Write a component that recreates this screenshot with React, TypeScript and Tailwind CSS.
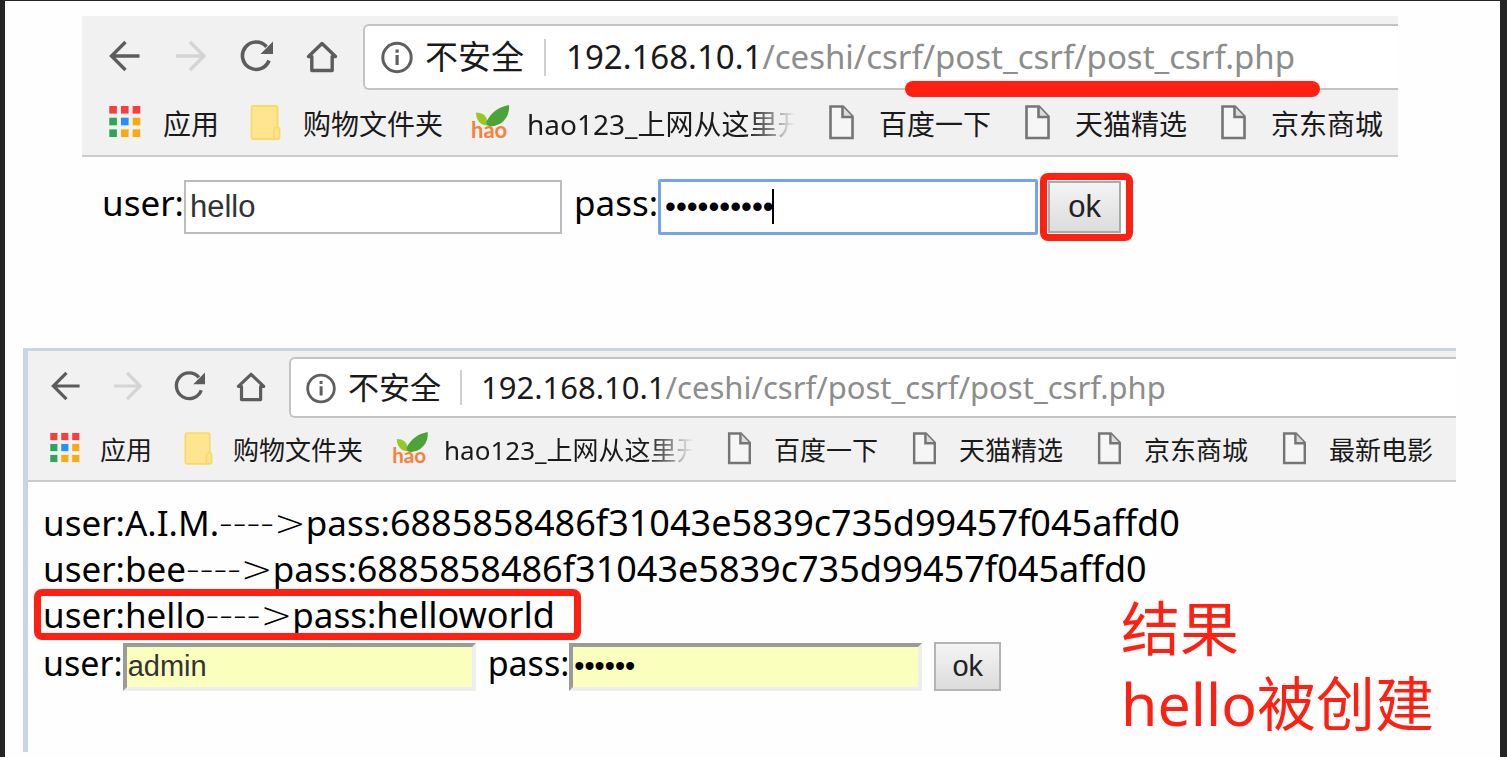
import type { ReactNode } from "react";

type Size = "lg" | "md";

const URL_HOST = "192.168.10.1";
const URL_PATH = "/ceshi/csrf/post_csrf/post_csrf.php";

const sizes = {
  lg: {
    icon: "size-8 shrink-0 overflow-visible",
    nav: "flex items-center gap-[34px] pr-6 pb-[3px] pl-[27px]",
    toolbar: "flex pt-2",
    address:
      "relative flex h-[66px] flex-1 items-center rounded-l-md border-2 border-r-0 border-[#c3c3c3] bg-white pl-4",
    secure: "ml-3 text-[33px]",
    divider: "mx-5 h-[37px] w-0.5 bg-[#cfcfcf]",
    url: "text-[33px]",
    bookmarks: "flex h-[65px] items-center gap-[30px] overflow-hidden pb-0.5 pl-[27px] text-[28px]",
    bookmark: "flex shrink-0 items-center gap-[22px] whitespace-nowrap",
    faded: "w-[268px] pt-1",
  },
  md: {
    icon: "size-[30px] shrink-0 overflow-visible",
    nav: "flex items-center gap-8 pr-[22px] pb-[3px] pl-[23px]",
    toolbar: "flex pt-[6px]",
    address:
      "relative flex h-[61px] flex-1 items-center rounded-l-md border-2 border-r-0 border-[#c3c3c3] bg-white pl-[15px]",
    secure: "ml-3 text-[31px]",
    divider: "mx-[19px] h-[35px] w-0.5 bg-[#cfcfcf]",
    url: "text-[31px]",
    bookmarks: "flex h-[62px] items-center gap-[31px] overflow-hidden pb-0.5 pl-[22px] text-[26px]",
    bookmark: "flex shrink-0 items-center gap-5 whitespace-nowrap",
    faded: "w-[249px] pt-1",
  },
};

function BackIcon({ className }: { className: string }) {
  return (
    <svg viewBox="0 0 32 32" className={className} fill="none" stroke="currentColor" strokeWidth="3.400" aria-hidden="true">
      <path d="M30.500 16H3M16.500 2 2.500 16l14 14" />
    </svg>
  );
}

function ForwardIcon({ className }: { className: string }) {
  return (
    <svg viewBox="0 0 32 32" className={className} fill="none" stroke="currentColor" strokeWidth="3.400" aria-hidden="true">
      <path d="M1 16h28M15 2l14 14-14 14" />
    </svg>
  );
}

function ReloadIcon({ className }: { className: string }) {
  return (
    <svg viewBox="0 0 32 32" className={className} aria-hidden="true">
      <path
        d="M25.500 6.700A13.700 13.700 0 1 0 28 20.500"
        fill="none"
        stroke="currentColor"
        strokeWidth="3.600"
      />
      <path d="M32 1.500v12.500H19.500z" fill="currentColor" />
    </svg>
  );
}

function HomeIcon({ className }: { className: string }) {
  return (
    <svg
      viewBox="0 0 32 32"
      className={className}
      fill="none"
      stroke="currentColor"
      strokeWidth="3.400"
      strokeLinejoin="round"
      aria-hidden="true"
    >
      <path d="M15 3.500 1.500 16.500h3.300V30.500h20.400V16.500h3.300z" />
    </svg>
  );
}

function InfoIcon({ className }: { className: string }) {
  return (
    <svg viewBox="0 0 32 32" className={className} aria-hidden="true">
      <circle cx="16" cy="16.500" r="14.200" fill="none" stroke="currentColor" strokeWidth="3" />
      <path d="M14.500 8.500h3.200v3.200h-3.200zM14.500 14h3.200v10h-3.200z" fill="currentColor" />
    </svg>
  );
}

function AppsIcon({ className }: { className: string }) {
  const colors = [
    "#fb3c3c", "#fb3c3c", "#fb3c3c",
    "#2ea35b", "#2390fb", "#fba90c",
    "#2ea35b", "#fba90c", "#fba90c",
  ];
  return (
    <svg viewBox="0 0 32 32" className={className} aria-hidden="true">
      {colors.map((color, i) => (
        <rect key={i} x={(i % 3) * 11.7 + 0.3} y={Math.floor(i / 3) * 11.7} width="7.600" height="7.600" fill={color} />
      ))}
    </svg>
  );
}

function FolderIcon({ className }: { className: string }) {
  return (
    <svg viewBox="0 0 32 32" className={className} fill="#ffe590" stroke="#fbd963" strokeWidth="1.800" aria-hidden="true">
      <path d="M4.500 0h22a2 2 0 0 1 2 2v18l2 3v8a2 2 0 0 1-2 2h-24a2 2 0 0 1-2-2V2a2 2 0 0 1 2-2z" />
      <path d="M25 31V24.500a3 3 0 0 1 3-3.200M25 31a2 2 0 0 0 2 2" fill="none" />
    </svg>
  );
}

function FileIcon({ className }: { className: string }) {
  return (
    <svg viewBox="0 0 32 32" className={className} fill="#f6f6f6" stroke="#757575" strokeWidth="2.600" aria-hidden="true">
      <path d="M5.500 0.500h12.500l9.500 10V32h-22z" />
      <path d="M17.500 0.500v10.500h10" fill="#dcdcdc" />
    </svg>
  );
}

function HaoIcon({ className }: { className: string }) {
  return (
    <svg viewBox="0 0 32 32" className={className} aria-hidden="true">
      <path d="M3 6.500c7 0 11.500 3 12 13C8 19.500 3 15 3 6.500z" fill="#96ca22" />
      <path d="M36-1c1 12-7 21-19 21.500-3-1-4-3-3.500-5C18 7 25 1 36-1z" fill="#4aa437" />
      <text x="-2" y="32" fontSize="22" fontWeight="700" fill="#f5813a" fontFamily="Lato, sans-serif">
        hao
      </text>
    </svg>
  );
}

const bookmarks = [
  { label: "应用", Icon: AppsIcon },
  { label: "购物文件夹", Icon: FolderIcon },
  { label: "hao123_上网从这里开", Icon: HaoIcon, faded: true },
  { label: "百度一下", Icon: FileIcon },
  { label: "天猫精选", Icon: FileIcon },
  { label: "京东商城", Icon: FileIcon },
  { label: "最新电影", Icon: FileIcon },
];

function BrowserChrome({ size, count, children }: { size: Size; count: number; children?: ReactNode }) {
  const s = sizes[size];
  return (
    <header className="border-b-2 border-[#cbcbcb] bg-[#f1f1f1]">
      <div className={s.toolbar}>
        <nav className={s.nav} aria-label="Navigation">
          <button type="button" aria-label="Back" className="text-[#5c5c5c]">
            <BackIcon className={s.icon} />
          </button>
          <button type="button" aria-label="Forward" disabled className="text-[#d4d4d4]">
            <ForwardIcon className={s.icon} />
          </button>
          <button type="button" aria-label="Reload" className="text-[#5c5c5c]">
            <ReloadIcon className={s.icon} />
          </button>
          <button type="button" aria-label="Home" className="text-[#5c5c5c]">
            <HomeIcon className={s.icon} />
          </button>
        </nav>
        <div className={s.address}>
          <span className="text-[#5f5f5f]">
            <InfoIcon className={s.icon} />
          </span>
          <span className={s.secure}>不安全</span>
          <span className={s.divider} />
          <span className={s.url}>
            {URL_HOST}
            <span className="text-[#8d8d8d]">{URL_PATH}</span>
          </span>
          {children}
        </div>
      </div>
      <div className={s.bookmarks}>
        {bookmarks.slice(0, count).map(({ label, Icon, faded }) => (
          <a key={label} href="#" className={s.bookmark}>
            <Icon className={s.icon} />
            {faded ? (
              <span className={s.faded}>
                <span className="block overflow-hidden [mask-image:linear-gradient(to_right,black_82%,transparent)]">
                  {label}
                </span>
              </span>
            ) : (
              <span className="pt-1">{label}</span>
            )}
          </a>
        ))}
      </div>
    </header>
  );
}

const records = [
  { user: "A.I.M.", pass: "6885858486f31043e5839c735d99457f045affd0" },
  { user: "bee", pass: "6885858486f31043e5839c735d99457f045affd0" },
  { user: "hello", pass: "helloworld", marked: true },
];

export default function App() {
  return (
    <div className="min-h-screen bg-[#252423] pt-px pr-[7px] pl-[5px] font-['Noto_Sans','Noto_Sans_CJK_SC',sans-serif] text-[#1a1a1a]">
      <main className="min-h-[calc(100vh-1px)] bg-[#fefefe] pt-[15px] pb-1">
        <section className="mr-[102px] ml-[77px]">
          <BrowserChrome size="lg" count={6}>
            <span className="absolute top-[55px] left-[540px] h-4 w-[415px] rounded-full bg-[#ff2012]" />
          </BrowserChrome>
          <form className="flex items-center pt-[22px] pl-5 text-[35px] text-black" onSubmit={(e) => e.preventDefault()}>
            <label htmlFor="user-create" className="pb-2 leading-[48px]">user:</label>
            <input
              id="user-create"
              type="text"
              defaultValue="hello"
              className="h-[54px] w-[378px] border-2 border-[#bcbcbc] bg-white px-1 font-['Liberation_Sans',sans-serif] text-[31px] text-[#333] outline-none"
            />
            <label htmlFor="pass-create" className="pb-2 pl-3 leading-[48px]">pass:</label>
            <span className="relative">
              <input
                id="pass-create"
                type="password"
                defaultValue="helloworld"
                className="block h-14 w-[380px] rounded-xs border-3 border-[#76a3ef] bg-white px-1 font-['Liberation_Sans',sans-serif] text-[31px] text-black outline-none"
              />
              <span className="absolute top-2.5 left-[114px] h-[35px] w-0.5 bg-black" />
            </span>
            <span className="relative ml-2.5">
              <button
                type="submit"
                className="block h-[52px] w-[73px] border-2 border-[#a9a9a9] bg-linear-to-b from-[#f4f4f4] to-[#dcdcdc] font-['Liberation_Sans',sans-serif] text-[31px] text-[#222]"
              >
                ok
              </button>
              <span className="pointer-events-none absolute -top-2 -right-3 -bottom-2 -left-2 rounded-lg border-[7px] border-[#ff2012]" />
            </span>
          </form>
        </section>

        <section className="relative mt-[113px] mr-[44px] ml-[18px] border-t-3 border-l-[5px] border-[#c9d4e6] pb-[61px]">
          <BrowserChrome size="md" count={7} />
          <ul className="pt-[18px] pl-[15px] text-[35px] leading-[46px] text-black">
            {records.map(({ user, pass, marked }) => (
              <li key={user} className="relative h-[46px] whitespace-nowrap">
                user:{user}
                <span className="font-['DejaVu_Sans',sans-serif] text-[38px] font-extralight">{"---->"}</span>
                pass:<span className="text-[36px]">{pass}</span>
                {marked && (
                  <span className="pointer-events-none absolute -top-[3px] -left-[9px] h-[51px] w-[547px] rounded-lg border-[7px] border-[#ff2012]" />
                )}
              </li>
            ))}
          </ul>
          <form className="flex items-center pt-1 pl-[15px] text-[34px] text-black" onSubmit={(e) => e.preventDefault()}>
            <label htmlFor="user-result" className="pb-2 leading-10">user:</label>
            <input
              id="user-result"
              type="text"
              defaultValue="admin"
              className="h-12 w-[353px] border-4 border-t-[#9b9b9b] border-r-[#eeeeee] border-b-[#eeeeee] border-l-[#9b9b9b] bg-[#faffbd] px-px font-['Liberation_Sans',sans-serif] text-[29px] text-[#333] outline-none"
            />
            <label htmlFor="pass-result" className="pb-2 pl-3 leading-10">pass:</label>
            <input
              id="pass-result"
              type="password"
              defaultValue="secret"
              className="h-12 w-[353px] border-4 border-t-[#9b9b9b] border-r-[#eeeeee] border-b-[#eeeeee] border-l-[#9b9b9b] bg-[#faffbd] px-px font-['Liberation_Sans',sans-serif] text-[29px] text-black outline-none"
            />
            <button
              type="submit"
              className="ml-3 h-[49px] w-[67px] border-2 border-[#b4b4b4] bg-linear-to-b from-[#f4f4f4] to-[#dcdcdc] font-['Liberation_Sans',sans-serif] text-[29px] text-[#222]"
            >
              ok
            </button>
          </form>
          <p className="absolute right-[22px] bottom-[11px] text-[59px] leading-[75px] text-[#ff2012]">
            结果
            <br />
            hello被创建
          </p>
        </section>
      </main>
    </div>
  );
}
